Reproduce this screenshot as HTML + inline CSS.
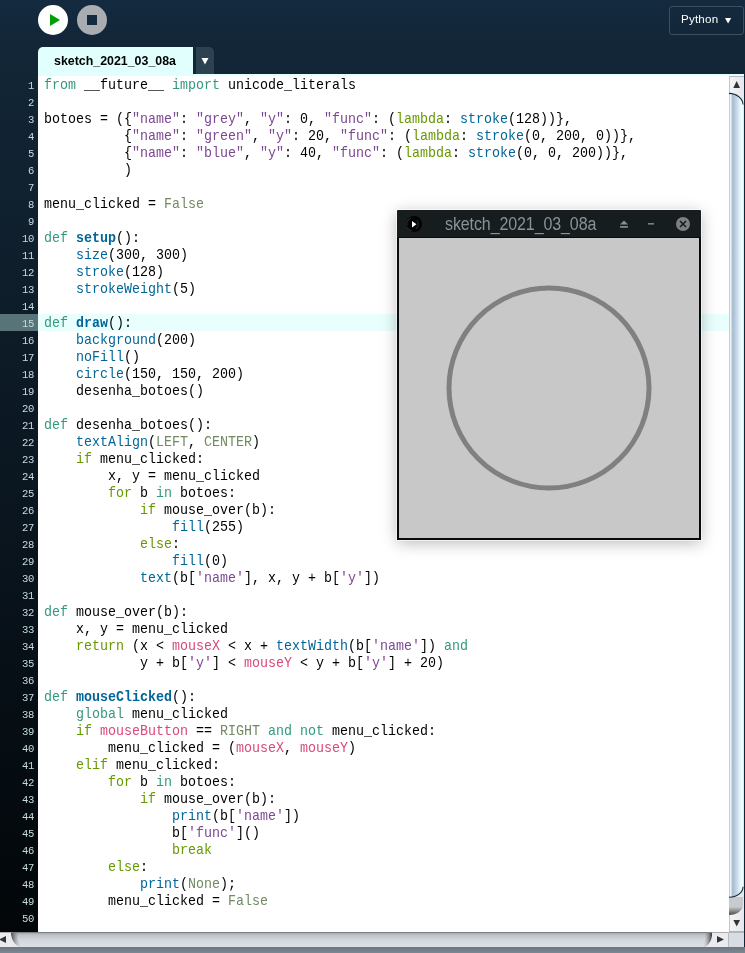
<!DOCTYPE html>
<html><head><meta charset="utf-8">
<style>
*{margin:0;padding:0;box-sizing:border-box}
html,body{width:745px;height:953px;overflow:hidden}
body{position:relative;background:linear-gradient(#142a3e,#132638 47px,#122535 76px);font-family:"Liberation Sans",sans-serif}
.abs{position:absolute}
/* toolbar */
#run{left:38px;top:5px;width:30px;height:30px;border-radius:50%;background:#fff}
#run svg{position:absolute;left:0;top:0}
#stop{left:77px;top:5px;width:30px;height:30px;border-radius:50%;background:#a9adb2}
#stop b{position:absolute;left:10px;top:10px;width:10px;height:10px;background:#142a3e}
#mode{left:669px;top:6px;width:75px;height:29px;border:1px solid #3a505e;border-radius:3px;color:#fff;font-size:11.6px;line-height:27px}
#mode span{position:absolute;left:11px;top:-2px;letter-spacing:0.2px;will-change:transform}
#mode svg{position:absolute;left:55px;top:10.5px}
/* tabs */
#tab{left:38px;top:47px;width:155px;height:29px;background:#e0fffd;border-radius:5px 0 0 0}
#tab span{position:absolute;left:16px;top:7px;font-weight:bold;font-size:12.4px;color:#000;line-height:14px;transform:scaleY(1.1);transform-origin:0 11px;will-change:transform}
#dd{left:196px;top:47px;width:18px;height:27px;background:#2d4251;border-radius:0 5px 0 0}
#strip{left:38px;top:74px;width:706px;height:2px;background:#e0fffd}
/* editor */
#gutter{left:0;top:76px;width:38px;height:856px;background:linear-gradient(#122535,#020609)}
#editor{left:38px;top:76px;width:691px;height:856px;background:#fff;overflow:hidden}
.gn{position:absolute;left:0;width:38px;height:17px;padding-right:3.7px;text-align:right;font-family:"Liberation Mono",monospace;font-size:10.6px;letter-spacing:-0.3px;line-height:17px;color:#c4dcdc}
.gn span{display:inline-block;transform:translateY(2px) scaleY(1.06);transform-origin:0 12px;will-change:transform}
.gn.hl{background:#587478}
.ln{position:absolute;left:0;width:691px;height:17px;white-space:pre;font-family:"Liberation Mono",monospace;font-size:13.333px;line-height:17px;color:#000}
.ln span{position:absolute;left:6px;top:0;transform:translateY(1px) scaleY(1.08);transform-origin:0 12px;will-change:transform}
.ln.hl{background:#e8fffd}
i{font-style:normal}
.k1{color:#33997e}.k3{color:#669900}.k4{color:#d94a7a}.s{color:#7d4793}.l2{color:#718a62}.f{color:#006699}.fb{color:#006699;font-weight:bold}
/* scrollbars */
#vs{left:729px;top:76px}
#hs{left:0;top:932px}
#corner{left:729px;top:932px;width:15px;height:15px;background:#d8dce4;border-top:1px solid #b4b8bc}
#rb{left:744px;top:74px;width:1px;height:873px;background:#122535}
#bot{left:0;top:947px;width:745px;height:6px;background:linear-gradient(#6b7580,#7e8892)}
/* sketch window */
#win{left:397px;top:210px;width:304px;height:330px;background:linear-gradient(#171c1f,#171c1f 27px,#080b0d 27px);border-radius:1px 1px 0 0;box-shadow:0 0 0 1px rgba(255,255,255,.6),0 3px 16px rgba(0,0,0,.28)}
#canvas{position:absolute;left:2px;top:28px;width:300px;height:300px;background:#c8c8c8}
#wtitle{position:absolute;left:48px;top:5px;will-change:transform;font-size:16px;line-height:20px;color:#8b9196;letter-spacing:-0.1px;transform:scaleY(1.1);transform-origin:0 15px}
</style></head><body>
<div id="run" class="abs"><svg width="30" height="30"><path d="M12 9 L22 15 L12 21 Z" fill="#00a000"/></svg></div>
<div id="stop" class="abs"><b></b></div>
<div id="mode" class="abs"><span>Python</span><svg width="7" height="6"><path d="M0 0H6.2L3.1 5.4Z" fill="#fff"/></svg></div>
<div id="tab" class="abs"><span>sketch_2021_03_08a</span></div>
<div id="dd" class="abs"><svg width="18" height="27" style="position:absolute;left:0;top:0"><path d="M5.5 11H12.5L9 17.5Z" fill="#fff"/></svg></div>
<div id="strip" class="abs"></div>
<div id="gutter" class="abs">
<div class="gn" style="top:0px"><span>1</span></div><div class="gn" style="top:17px"><span>2</span></div><div class="gn" style="top:34px"><span>3</span></div><div class="gn" style="top:51px"><span>4</span></div><div class="gn" style="top:68px"><span>5</span></div><div class="gn" style="top:85px"><span>6</span></div><div class="gn" style="top:102px"><span>7</span></div><div class="gn" style="top:119px"><span>8</span></div><div class="gn" style="top:136px"><span>9</span></div><div class="gn" style="top:153px"><span>10</span></div><div class="gn" style="top:170px"><span>11</span></div><div class="gn" style="top:187px"><span>12</span></div><div class="gn" style="top:204px"><span>13</span></div><div class="gn" style="top:221px"><span>14</span></div><div class="gn hl" style="top:238px"><span>15</span></div><div class="gn" style="top:255px"><span>16</span></div><div class="gn" style="top:272px"><span>17</span></div><div class="gn" style="top:289px"><span>18</span></div><div class="gn" style="top:306px"><span>19</span></div><div class="gn" style="top:323px"><span>20</span></div><div class="gn" style="top:340px"><span>21</span></div><div class="gn" style="top:357px"><span>22</span></div><div class="gn" style="top:374px"><span>23</span></div><div class="gn" style="top:391px"><span>24</span></div><div class="gn" style="top:408px"><span>25</span></div><div class="gn" style="top:425px"><span>26</span></div><div class="gn" style="top:442px"><span>27</span></div><div class="gn" style="top:459px"><span>28</span></div><div class="gn" style="top:476px"><span>29</span></div><div class="gn" style="top:493px"><span>30</span></div><div class="gn" style="top:510px"><span>31</span></div><div class="gn" style="top:527px"><span>32</span></div><div class="gn" style="top:544px"><span>33</span></div><div class="gn" style="top:561px"><span>34</span></div><div class="gn" style="top:578px"><span>35</span></div><div class="gn" style="top:595px"><span>36</span></div><div class="gn" style="top:612px"><span>37</span></div><div class="gn" style="top:629px"><span>38</span></div><div class="gn" style="top:646px"><span>39</span></div><div class="gn" style="top:663px"><span>40</span></div><div class="gn" style="top:680px"><span>41</span></div><div class="gn" style="top:697px"><span>42</span></div><div class="gn" style="top:714px"><span>43</span></div><div class="gn" style="top:731px"><span>44</span></div><div class="gn" style="top:748px"><span>45</span></div><div class="gn" style="top:765px"><span>46</span></div><div class="gn" style="top:782px"><span>47</span></div><div class="gn" style="top:799px"><span>48</span></div><div class="gn" style="top:816px"><span>49</span></div><div class="gn" style="top:833px"><span>50</span></div>
</div>
<div id="editor" class="abs">
<div class="ln" style="top:0px"><span><i class="k1">from</i> __future__ <i class="k1">import</i> unicode_literals</span></div>
<div class="ln" style="top:17px"><span></span></div>
<div class="ln" style="top:34px"><span>botoes = ({<i class="s">"name"</i>: <i class="s">"grey"</i>, <i class="s">"y"</i>: 0, <i class="s">"func"</i>: (<i class="k3">lambda</i>: <i class="f">stroke</i>(128))},</span></div>
<div class="ln" style="top:51px"><span>          {<i class="s">"name"</i>: <i class="s">"green"</i>, <i class="s">"y"</i>: 20, <i class="s">"func"</i>: (<i class="k3">lambda</i>: <i class="f">stroke</i>(0, 200, 0))},</span></div>
<div class="ln" style="top:68px"><span>          {<i class="s">"name"</i>: <i class="s">"blue"</i>, <i class="s">"y"</i>: 40, <i class="s">"func"</i>: (<i class="k3">lambda</i>: <i class="f">stroke</i>(0, 0, 200))},</span></div>
<div class="ln" style="top:85px"><span>          )</span></div>
<div class="ln" style="top:102px"><span></span></div>
<div class="ln" style="top:119px"><span>menu_clicked = <i class="l2">False</i></span></div>
<div class="ln" style="top:136px"><span></span></div>
<div class="ln" style="top:153px"><span><i class="k1">def</i> <i class="fb">setup</i>():</span></div>
<div class="ln" style="top:170px"><span>    <i class="f">size</i>(300, 300)</span></div>
<div class="ln" style="top:187px"><span>    <i class="f">stroke</i>(128)</span></div>
<div class="ln" style="top:204px"><span>    <i class="f">strokeWeight</i>(5)</span></div>
<div class="ln" style="top:221px"><span></span></div>
<div class="ln hl" style="top:238px"><span><i class="k1">def</i> <i class="fb">draw</i>():</span></div>
<div class="ln" style="top:255px"><span>    <i class="f">background</i>(200)</span></div>
<div class="ln" style="top:272px"><span>    <i class="f">noFill</i>()</span></div>
<div class="ln" style="top:289px"><span>    <i class="f">circle</i>(150, 150, 200)</span></div>
<div class="ln" style="top:306px"><span>    desenha_botoes()</span></div>
<div class="ln" style="top:323px"><span></span></div>
<div class="ln" style="top:340px"><span><i class="k1">def</i> desenha_botoes():</span></div>
<div class="ln" style="top:357px"><span>    <i class="f">textAlign</i>(<i class="l2">LEFT</i>, <i class="l2">CENTER</i>)</span></div>
<div class="ln" style="top:374px"><span>    <i class="k3">if</i> menu_clicked:</span></div>
<div class="ln" style="top:391px"><span>        x, y = menu_clicked</span></div>
<div class="ln" style="top:408px"><span>        <i class="k3">for</i> b <i class="k1">in</i> botoes:</span></div>
<div class="ln" style="top:425px"><span>            <i class="k3">if</i> mouse_over(b):</span></div>
<div class="ln" style="top:442px"><span>                <i class="f">fill</i>(255)</span></div>
<div class="ln" style="top:459px"><span>            <i class="k3">else</i>:</span></div>
<div class="ln" style="top:476px"><span>                <i class="f">fill</i>(0)</span></div>
<div class="ln" style="top:493px"><span>            <i class="f">text</i>(b[<i class="s">'name'</i>], x, y + b[<i class="s">'y'</i>])</span></div>
<div class="ln" style="top:510px"><span></span></div>
<div class="ln" style="top:527px"><span><i class="k1">def</i> mouse_over(b):</span></div>
<div class="ln" style="top:544px"><span>    x, y = menu_clicked</span></div>
<div class="ln" style="top:561px"><span>    <i class="k3">return</i> (x &lt; <i class="k4">mouseX</i> &lt; x + <i class="f">textWidth</i>(b[<i class="s">'name'</i>]) <i class="k1">and</i></span></div>
<div class="ln" style="top:578px"><span>            y + b[<i class="s">'y'</i>] &lt; <i class="k4">mouseY</i> &lt; y + b[<i class="s">'y'</i>] + 20)</span></div>
<div class="ln" style="top:595px"><span></span></div>
<div class="ln" style="top:612px"><span><i class="k1">def</i> <i class="fb">mouseClicked</i>():</span></div>
<div class="ln" style="top:629px"><span>    <i class="k1">global</i> menu_clicked</span></div>
<div class="ln" style="top:646px"><span>    <i class="k3">if</i> <i class="k4">mouseButton</i> == <i class="l2">RIGHT</i> <i class="k1">and</i> <i class="k1">not</i> menu_clicked:</span></div>
<div class="ln" style="top:663px"><span>        menu_clicked = (<i class="k4">mouseX</i>, <i class="k4">mouseY</i>)</span></div>
<div class="ln" style="top:680px"><span>    <i class="k3">elif</i> menu_clicked:</span></div>
<div class="ln" style="top:697px"><span>        <i class="k3">for</i> b <i class="k1">in</i> botoes:</span></div>
<div class="ln" style="top:714px"><span>            <i class="k3">if</i> mouse_over(b):</span></div>
<div class="ln" style="top:731px"><span>                <i class="f">print</i>(b[<i class="s">'name'</i>])</span></div>
<div class="ln" style="top:748px"><span>                b[<i class="s">'func'</i>]()</span></div>
<div class="ln" style="top:765px"><span>                <i class="k3">break</i></span></div>
<div class="ln" style="top:782px"><span>        <i class="k3">else</i>:</span></div>
<div class="ln" style="top:799px"><span>            <i class="f">print</i>(<i class="l2">None</i>);</span></div>
<div class="ln" style="top:816px"><span>        menu_clicked = <i class="l2">False</i></span></div>
<div class="ln" style="top:833px"><span></span></div>
</div>
<svg id="vs" class="abs" width="15" height="856" viewBox="0 0 15 856">
<defs>
<linearGradient id="thg" x1="0" x2="1" y1="0" y2="0">
<stop offset="0" stop-color="#c6ced3"/><stop offset="0.066" stop-color="#c6ced3"/>
<stop offset="0.067" stop-color="#f1f3f5"/><stop offset="0.133" stop-color="#f1f3f5"/>
<stop offset="0.2" stop-color="#c2d0dd"/><stop offset="0.24" stop-color="#a9bed2"/>
<stop offset="0.333" stop-color="#adc2d6"/><stop offset="0.6" stop-color="#cadeee"/>
<stop offset="0.87" stop-color="#effefe"/><stop offset="1" stop-color="#effefe"/>
</linearGradient>
<linearGradient id="btg" x1="0" x2="1" y1="0" y2="0">
<stop offset="0" stop-color="#d0d2d6"/><stop offset="0.1" stop-color="#f4f4f6"/><stop offset="1" stop-color="#e6e7ea"/>
</linearGradient>
<linearGradient id="lowg" x1="0" x2="0" y1="0" y2="1">
<stop offset="0" stop-color="#c8cace"/><stop offset="0.55" stop-color="#c8cace"/><stop offset="1" stop-color="#4a4c50"/>
</linearGradient>
</defs>
<rect x="0" y="0" width="15" height="856" fill="url(#btg)"/>
<rect x="0" y="0" width="15" height="1" fill="#b8bcc0"/>
<rect x="0" y="0" width="1" height="17" fill="#c2c6ca"/>
<path d="M4.3 12H11L7.65 5Z" fill="#333"/>
<path d="M0 821 H0 L0 839 C8 839 14 834 14 829 V821Z" fill="url(#lowg)"/>
<path d="M0 17.4 C8 17.4 14 23 14 28.6 V810.7 C14 816.5 8 821.3 0 821.3 Z" fill="url(#thg)"/>
<path d="M0 17.4 C8 17.4 14 23 14 28.6" fill="none" stroke="#16283a" stroke-width="1.1"/>
<path d="M14 810.7 C14 816.5 8 821.3 0 821.3" fill="none" stroke="#16283a" stroke-width="1.1"/>
<rect x="0" y="839" width="1" height="16" fill="#c2c6ca"/>
<path d="M4.4 844H11L7.7 850.5Z" fill="#333"/>
<rect x="0" y="855" width="15" height="1" fill="#b0b4b8"/>
</svg>
<svg id="hs" class="abs" width="729" height="15" viewBox="0 0 729 15">
<defs>
<linearGradient id="hthg" x1="0" x2="0" y1="0" y2="1">
<stop offset="0" stop-color="#7d8186"/><stop offset="0.067" stop-color="#7d8186"/>
<stop offset="0.08" stop-color="#a8acb2"/><stop offset="0.2" stop-color="#bfc2c7"/>
<stop offset="0.55" stop-color="#d3d6dc"/><stop offset="1" stop-color="#dde0e6"/>
</linearGradient>
<linearGradient id="hlg" gradientUnits="userSpaceOnUse" x1="11" x2="21" y1="0" y2="0">
<stop offset="0" stop-color="#3a3c40" stop-opacity="0.95"/><stop offset="1" stop-color="#c0c3c8" stop-opacity="0"/>
</linearGradient>
<linearGradient id="hrg" gradientUnits="userSpaceOnUse" x1="712" x2="703" y1="0" y2="0">
<stop offset="0" stop-color="#2a2c30" stop-opacity="0.95"/><stop offset="1" stop-color="#c0c3c8" stop-opacity="0"/>
</linearGradient>
</defs>
<rect x="0" y="0" width="729" height="15" fill="#eaebee"/>
<rect x="0" y="0" width="729" height="1" fill="#a8acb0"/>
<path d="M-1 7.5L6 4V11Z" fill="#333"/>
<rect x="11" y="0" width="701" height="15" fill="url(#hthg)"/>
<path d="M11 1 H19 C16 5 17 11 25 15 H19 C14 12 11 7 11 1Z" fill="url(#hlg)"/>
<path d="M11 1 C11 7 14 12 19 15 H11Z" fill="#e8eaed"/>
<path d="M712 1 H704 C707 6 705 12 699 15 H705.5 C710 12 712.5 7 712 1Z" fill="url(#hrg)"/>
<path d="M712 1 C712.5 7 710 12 705.5 15 H712Z" fill="#eaebee"/>
<path d="M717 4V10.8L724 7.4Z" fill="#333"/>
<rect x="728" y="0" width="1" height="15" fill="#b8bcc0"/>
</svg>
<div id="corner" class="abs"></div>
<div id="rb" class="abs"></div>
<div id="bot" class="abs"></div>
<div id="win" class="abs">
<div id="wtitle">sketch_2021_03_08a</div>
<svg style="position:absolute;left:0;top:0" width="304" height="28">
<circle cx="17" cy="14" r="8" fill="#020202"/>
<path d="M10 16 Q9 10 14 8 M20 10 Q23 15 19 19 M15 21 Q11 20 10 17" stroke="#262626" stroke-width="1.2" fill="none"/>
<path d="M15 11 L19.5 14.2 L15 17.4Z" fill="#fff"/>
<path d="M223 14.6H231L227 10.6Z" fill="#8a8f93"/>
<rect x="223" y="16" width="8" height="1.8" fill="#7f8488"/>
<rect x="251" y="13" width="6" height="1.6" fill="#7a7f83"/>
<circle cx="286" cy="14" r="7" fill="#7c8083"/>
<path d="M283 11L289 17M289 11L283 17" stroke="#171c1f" stroke-width="1.6"/>
</svg>
<div id="canvas"><svg width="300" height="300"><circle cx="150" cy="150" r="100" fill="none" stroke="#808080" stroke-width="5"/></svg></div>
</div>
</body></html>
